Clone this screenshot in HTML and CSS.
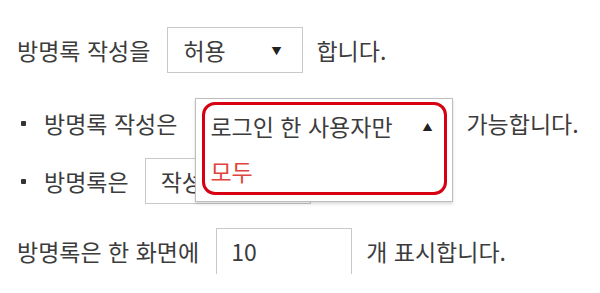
FILE: index.html
```html
<!DOCTYPE html>
<html lang="ko">
<head>
  <meta charset="UTF-8" />
  <title>방명록 설정</title>
  <link rel="stylesheet" href="styles.css">
</head>
<body>

<div class="settings">
  <!-- 방명록 허용 -->
  <div class="row row-first">
    <span>방명록 작성을</span>
    <div class="select select-allow">
      <span>허용</span>
      <span class="caret">&#9660;</span>
    </div>
    <span>합니다.</span>
  </div>

  <ul class="options">
    <li class="row">
      <span class="dot"></span>
      <span>방명록 작성은</span>
      <div class="dropdown">
        <div class="dropdown-panel">
          <div class="dropdown-current">
            <span>로그인 한 사용자만</span>
            <span class="caret">&#9650;</span>
          </div>
          <div class="dropdown-item">모두</div>
          <div class="highlight"></div>
        </div>
      </div>
      <span>가능합니다.</span>
    </li>
    <li class="row">
      <span class="dot"></span>
      <span>방명록은</span>
      <div class="select select-order">
        <span>작성일순</span>
      </div>
    </li>
  </ul>

  <!-- 한 화면 표시 개수 -->
  <div class="row row-last">
    <span>방명록은 한 화면에</span>
    <input class="count" type="text" value="10">
    <span>개 표시합니다.</span>
  </div>
</div>

</body>
</html>
```

FILE: styles.css
```css
body {
  margin: 0;
  background: #fff;
  font-family: "Noto Sans CJK KR", "Noto Sans", sans-serif;
  font-size: 23px;
  color: #3c3c3c;
}

.settings {
  padding: 27px 0 0 17px;
}

.row {
  display: flex;
  align-items: center;
  height: 46px;
}

.options {
  list-style: none;
  margin: 27px 0 0 0;
  padding: 0;
  display: flex;
  flex-direction: column;
  gap: 12px;
}

.dot {
  width: 5px;
  height: 5px;
  border-radius: 1px;
  background: #333;
  margin: 0 18px 0 4px;
}

.select {
  box-sizing: border-box;
  height: 46px;
  border: 1px solid #c9c9c9;
  display: flex;
  align-items: center;
  justify-content: space-between;
  padding: 0 21px 0 15px;
  margin: 0 13px 0 17px;
  background: #fff;
}

.select-allow {
  width: 136px;
}

.select-order {
  width: 166px;
  margin-left: 16px;
}

.caret {
  font-size: 10px;
  color: #222;
}

.dropdown {
  position: relative;
  width: 258px;
  height: 46px;
  margin: 0 13px 0 18px;
}

.dropdown-panel {
  position: absolute;
  z-index: 2;
  top: -2px;
  left: 0;
  box-sizing: border-box;
  width: 258px;
  height: 104px;
  background: #fff;
  border: 1px solid #bdbdbd;
  box-shadow: 0 2px 3px rgba(0, 0, 0, 0.15);
}

.dropdown-current {
  display: flex;
  align-items: center;
  justify-content: space-between;
  height: 54px;
  padding: 0 20px 0 14px;
}

.dropdown-item {
  padding-left: 14px;
  color: #e0443e;
  line-height: 36px;
}

.highlight {
  position: absolute;
  top: 3px;
  left: 6px;
  right: 5px;
  bottom: 6px;
  border: 3px solid #d70012;
  border-radius: 13px;
}

.row-last {
  margin-top: 24px;
}

.count {
  box-sizing: border-box;
  width: 136px;
  height: 47px;
  margin: 0 14px 0 17px;
  padding: 0 14px;
  border: 1px solid #c9c9c9;
  font-family: inherit;
  font-size: 23px;
  color: #3c3c3c;
}
```
